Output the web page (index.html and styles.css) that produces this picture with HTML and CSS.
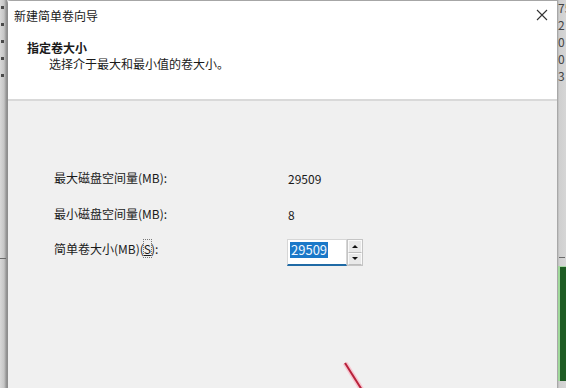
FILE: index.html
```html
<!DOCTYPE html>
<html lang="zh-CN">
<head>
    <meta charset="UTF-8">
    <title>新建简单卷向导</title>
    <link rel="stylesheet" href="styles.css">
</head>
<body>
    <div class="side left">
        <span class="dot"></span>
        <span class="dot"></span>
        <span class="dot"></span>
        <span class="dot"></span>
        <span class="dot"></span>
        <span class="tick low"></span>
    </div>
    <div class="dialog">
        <div class="header">
            <div class="title-row">
                <span class="title">新建简单卷向导</span>
                <svg class="close" width="12" height="12" viewBox="0 0 12 12">
                    <path d="M1 1 L11 11 M11 1 L1 11" stroke="#333" stroke-width="1.1" fill="none"/>
                </svg>
            </div>
            <div class="heading">指定卷大小</div>
            <div class="sub">选择介于最大和最小值的卷大小。</div>
        </div>
        <div class="content">
            <div class="row">
                <span class="label">最大磁盘空间量(MB):</span>
                <span class="value">29509</span>
            </div>
            <div class="row">
                <span class="label">最小磁盘空间量(MB):</span>
                <span class="value">8</span>
            </div>
            <div class="row size-row">
                <span class="label">简单卷大小(MB)(<u>S</u>):</span>
                <div class="spin">
                    <div class="spin-input"><span class="sel">29509</span></div>
                    <div class="spin-btns">
                        <div class="spin-btn"><span class="tri up"></span></div>
                        <div class="spin-btn"><span class="tri down"></span></div>
                    </div>
                </div>
            </div>
        </div>
        <svg class="arrow" width="40" height="40" viewBox="0 0 40 40">
            <path d="M14 13 L31 40" stroke="#f6c6d0" stroke-width="5" fill="none"/>
            <path d="M14 13 L31 40" stroke="#b8213a" stroke-width="2" fill="none"/>
        </svg>
    </div>
    <div class="side right">
        <div class="frag">75</div>
        <div class="frag">2</div>
        <div class="frag">0</div>
        <div class="frag">0</div>
        <div class="frag">3</div>
        <span class="tick mid"></span>
        <div class="green"></div>
    </div>
</body>
</html>
```

FILE: styles.css
```css
* {
    margin: 0;
    padding: 0;
    box-sizing: border-box;
}

body {
    width: 566px;
    height: 388px;
    overflow: hidden;
    display: flex;
    font-family: "Noto Sans CJK SC", "Noto Sans", sans-serif;
    font-size: 12px;
    color: #1a1a1a;
    background: #d4d4d4;
}

.side {
    position: relative;
    height: 388px;
}

.side.left {
    width: 7px;
    background: linear-gradient(to right, #d8d8d8 0, #c6c6c6 4px, #9c9c9c 6px, #8c8c8c 7px);
    display: flex;
    flex-direction: column;
    align-items: flex-start;
    padding: 6px 0 0 1px;
    gap: 14px;
}

.dot {
    width: 3px;
    height: 3px;
    background: #4a4a4a;
}

.tick {
    position: absolute;
    height: 1px;
    background: #6a6a6a;
}

.tick.low {
    top: 258px;
    left: 0;
    width: 6px;
}

.tick.mid {
    top: 257px;
    left: 2px;
    width: 6px;
}

.dialog {
    position: relative;
    width: 550px;
    height: 388px;
    border-top: 1px solid #a6a6a6;
    border-left: 1px solid #8e8e8e;
    border-top-left-radius: 4px;
    background: #f0f0f0;
}

.header {
    height: 100px;
    background: #fff;
    border-bottom: 2px solid #d9d9d9;
    padding: 6px 0 0 6px;
}

.title-row {
    display: flex;
    justify-content: space-between;
    align-items: center;
    height: 16px;
    padding-right: 9px;
}

.heading {
    margin-top: 17px;
    padding-left: 13px;
    font-weight: bold;
    line-height: 16px;
}

.sub {
    padding-left: 35px;
    line-height: 16px;
}

.content {
    padding: 63px 0 0 46px;
    display: flex;
    flex-direction: column;
    gap: 8px;
}

.row {
    display: flex;
    align-items: center;
    height: 28px;
}

.label {
    width: 234px;
    line-height: 16px;
}

.size-row {
    margin-top: 3px;
    height: 27px;
    align-items: flex-start;
}

.size-row .label {
    margin-top: 2px;
}

.size-row u {
    text-decoration: underline;
    outline: 1px dotted #777;
    outline-offset: 0;
}

.spin {
    display: flex;
    width: 76px;
    height: 27px;
    margin-left: -1px;
}

.spin-input {
    width: 60px;
    background: #fff;
    border: 1px solid #d6d6d6;
    border-bottom: 2px solid #1f6aa5;
    padding: 1px 0 0 2px;
}

.sel {
    display: inline-block;
    background: #1a78c8;
    color: #eef6ff;
    font-size: 13px;
    line-height: 16px;
    padding: 0 1px;
}

.spin-btns {
    width: 16px;
    display: flex;
    flex-direction: column;
    border: 1px solid #c4c4c4;
    background: #e9e9e9;
}

.spin-btn {
    flex: 1;
    display: flex;
    justify-content: center;
    align-items: center;
    border: 1px solid #fafafa;
    border-bottom-color: #bdbdbd;
}

.tri {
    width: 0;
    height: 0;
    border-left: 3px solid transparent;
    border-right: 3px solid transparent;
}

.tri.up {
    border-bottom: 3px solid #111;
}

.tri.down {
    border-top: 3px solid #111;
}

.arrow {
    position: absolute;
    left: 323px;
    top: 349px;
}

.side.right {
    width: 9px;
    background: linear-gradient(to right, #9a9a9a 0, #cfcfcf 2px, #d6d6d6 9px);
    overflow: hidden;
}

.frag {
    height: 17px;
    line-height: 17px;
    padding-left: 1px;
    font-size: 12px;
    color: #444;
    white-space: nowrap;
}

.frag:first-child {
    margin-top: -1px;
}

.green {
    position: absolute;
    top: 266px;
    left: 1px;
    width: 8px;
    height: 115px;
    background: #1e5c24;
    border-left: 2px solid #9fd89a;
    border-top: 1px solid #a8d8a4;
}
```
